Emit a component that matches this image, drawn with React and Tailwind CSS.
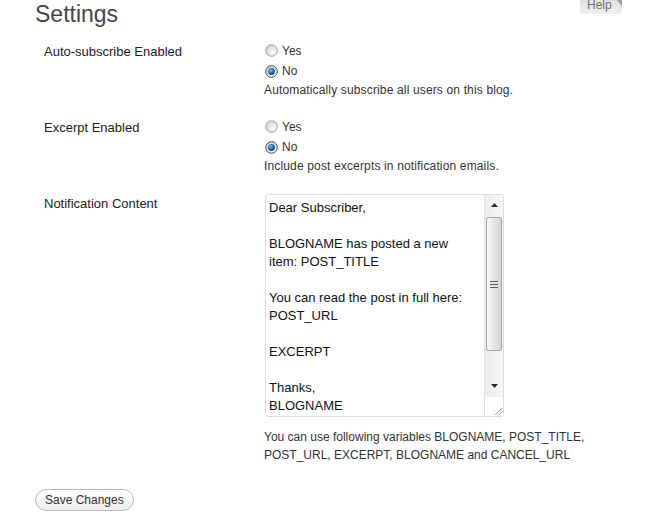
import React from "react";

function Radio({ checked }) {
  return (
    <svg width="13" height="13" viewBox="0 0 13 13" className="shrink-0">
      <defs>
        <radialGradient id="rgOff" cx="65%" cy="65%" r="70%">
          <stop offset="0" stopColor="#ffffff" />
          <stop offset="1" stopColor="#cfcfcf" />
        </radialGradient>
        <radialGradient id="rgBlue" cx="40%" cy="35%" r="70%">
          <stop offset="0" stopColor="#7cc6f2" />
          <stop offset="0.5" stopColor="#1f78b4" />
          <stop offset="1" stopColor="#0b3558" />
        </radialGradient>
      </defs>
      <circle cx="6.5" cy="6.5" r="5.8" fill="url(#rgOff)" stroke={checked ? "#4a4a4a" : "#a2a2a2"} strokeWidth="1" />
      {checked && <circle cx="6.5" cy="6.5" r="3.4" fill="url(#rgBlue)" />}
    </svg>
  );
}

function Option({ checked, label, h }) {
  return (
    <label className={`flex items-center ${h} text-[12px] text-[#333]`}>
      <span className="ml-[1px] flex">
        <Radio checked={checked} />
      </span>
      <span className="ml-[4px]">{label}</span>
    </label>
  );
}

function RadioRow({ title, description }) {
  return (
    <div className="flex h-[76px]">
      <div className="w-[264px] pl-[44px] pt-[2px] text-[13px] leading-[20px] text-[#222]">{title}</div>
      <div className="flex flex-col">
        <Option checked={false} label="Yes" h="h-[21px]" />
        <Option checked={true} label="No" h="h-[20px]" />
        <p className="text-[12px] leading-[18px] tracking-[0.15px] text-[#333]">{description}</p>
      </div>
    </div>
  );
}

const lines = [
  "Dear Subscriber,",
  "",
  "BLOGNAME has posted a new",
  "item: POST_TITLE",
  "",
  "You can read the post in full here:",
  "POST_URL",
  "",
  "EXCERPT",
  "",
  "Thanks,",
  "BLOGNAME",
];

function Scrollbar() {
  return (
    <div className="w-[19px] shrink-0 flex flex-col bg-linear-to-r from-[#ececec] to-[#f6f6f6] border-l border-[#e4e4e4]">
      <div className="h-[20px] flex items-center justify-center">
        <svg width="7" height="4" viewBox="0 0 7 4">
          <polygon points="3.5,0 7,4 0,4" fill="#2a2a2a" />
        </svg>
      </div>
      <div className="h-[2px]" />
      <div className="h-[134px] mx-[1px] rounded-[2px] border border-[#a5a5a5] bg-linear-to-r from-[#f8f8f8] via-[#e6e6e6] to-[#d4d4d4] flex items-center justify-center">
        <svg width="8" height="7" viewBox="0 0 8 7">
          <rect x="0" y="0" width="8" height="1" fill="#5a5a5a" />
          <rect x="0" y="3" width="8" height="1" fill="#5a5a5a" />
          <rect x="0" y="6" width="8" height="1" fill="#5a5a5a" />
        </svg>
      </div>
      <div className="flex-1" />
      <div className="h-[20px] flex items-center justify-center">
        <svg width="7" height="4" viewBox="0 0 7 4">
          <polygon points="0,0 7,0 3.5,4" fill="#2a2a2a" />
        </svg>
      </div>
      <div className="h-[20px] bg-white border-t border-[#eeeeee] flex items-end justify-end">
        <svg width="10" height="10" viewBox="0 0 10 10">
          <line x1="2" y1="9" x2="9" y2="2" stroke="#9a9a9a" strokeWidth="1" />
          <line x1="5.5" y1="9" x2="9" y2="5.5" stroke="#9a9a9a" strokeWidth="1" />
        </svg>
      </div>
    </div>
  );
}

export default function App() {
  return (
    <div className="relative w-[650px] h-[521px] overflow-hidden bg-white font-['Liberation_Sans',Arial,sans-serif]">
      <div className="absolute top-0 right-[28px] w-[42px] h-[14px] rounded-b-[3px] bg-linear-to-b from-[#e2e2e2] to-[#f0f0f0] text-[12px] leading-[12px] text-[#6f6f6f]">
        <span className="block -mt-[1px] pl-[7px]">Help</span>
        <svg className="absolute top-0 right-0" width="5" height="6" viewBox="0 0 5 6">
          <polygon points="0,0 5,0 5,6" fill="#9b9b9b" />
        </svg>
      </div>

      <h2 className="pl-[35px] text-[23px] leading-[28px] text-[#464646] font-normal">Settings</h2>

      <div className="mt-[12px] flex flex-col">
        <RadioRow title="Auto-subscribe Enabled" description="Automatically subscribe all users on this blog." />
        <RadioRow title="Excerpt Enabled" description="Include post excerpts in notification emails." />

        <div className="flex">
          <div className="w-[264px] pl-[44px] pt-[2px] text-[13px] leading-[20px] text-[#222]">Notification Content</div>
          <div className="flex flex-col pt-[2px]">
            <div className="ml-[1px] w-[239px] h-[223px] border border-[#dcdcdc] rounded-[3px] flex overflow-hidden bg-white">
              <div className="flex-1 overflow-hidden pl-[3px] pt-[4px] text-[13px] leading-[18px] text-[#111]">
                {lines.map((l, i) => (
                  <div key={i} className="h-[18px] whitespace-nowrap">{l}</div>
                ))}
              </div>
              <Scrollbar />
            </div>
            <div className="mt-[11px] flex flex-col text-[12px] leading-[18px] text-[#333]">
              <div>You can use following variables BLOGNAME, POST_TITLE,</div>
              <div>POST_URL, EXCERPT, BLOGNAME and CANCEL_URL</div>
            </div>
          </div>
        </div>
      </div>

      <div className="flex pl-[35px] mt-[25px]">
        <button className="h-[22px] px-[9px] rounded-full border border-[#bbbbbb] bg-linear-to-b from-[#ffffff] to-[#ededed] text-[12px] leading-[20px] text-[#333]">
          Save Changes
        </button>
      </div>
    </div>
  );
}
